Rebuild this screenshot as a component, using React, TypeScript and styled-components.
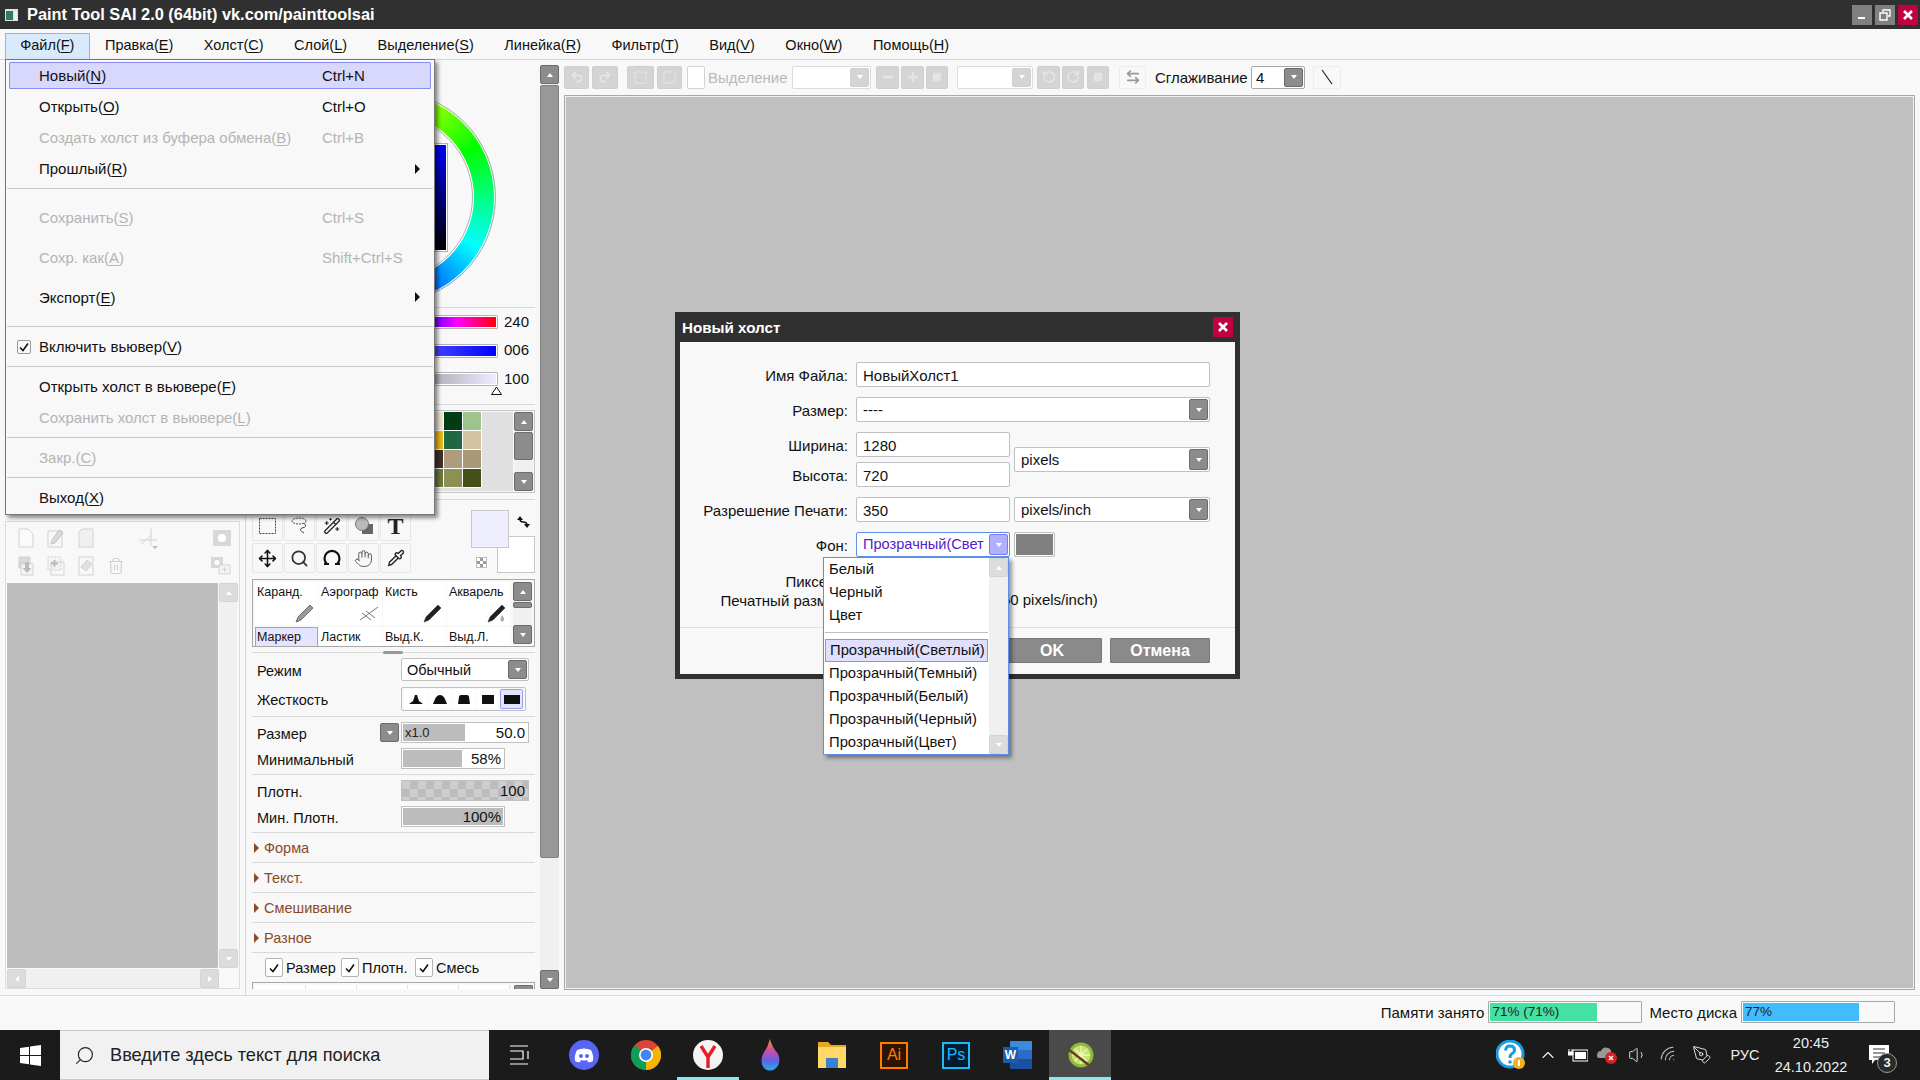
import React from 'react';
import styled, { createGlobalStyle } from 'styled-components';
import { Hand, Move, Pipette, Search, Trash2, WandSparkles, Undo2, Redo2, RotateCcw, RotateCw, Minus, Plus, Square, ArrowLeftRight, ChevronUp, Wifi, Volume1, PenTool } from 'lucide-react';

// == styles =======================================================================================
const GlobalStyle = createGlobalStyle`
  html, body { margin: 0; padding: 0; background: #f8f8f8; }
  body { font-family: "Liberation Sans", "Noto Sans", sans-serif; font-size: 15px; color: #111; }
  * { box-sizing: border-box; }
  u { text-underline-offset: 2px; }
`;

const Shell = styled.div`
  position: relative;
  width: 1920px;
  height: 1080px;
  overflow: hidden;
  display: flex;
  flex-direction: column;
  background: #f8f8f8;
`;

const TitleBar = styled.div`
  height: 29px;
  flex: none;
  background: #303030;
  color: #fff;
  display: flex;
  align-items: center;
  padding: 0 2px 0 5px;
`;

const TitleText = styled.div`
  font-weight: bold;
  font-size: 16.35px;
  flex: 1;
  margin-left: 9px;
`;

const WinBtn = styled.div<{ $close?: boolean }>`
  width: 20px;
  height: 20px;
  margin-left: 3px;
  background: ${ ( { $close } ) => ( $close ? '#c00040' : '#808080' ) };
  display: flex;
  align-items: center;
  justify-content: center;
`;

const MenuBar = styled.div`
  height: 31px;
  flex: none;
  display: flex;
  padding: 4px 0 0 5px;
  border-bottom: 1px solid #d4d4d4;
`;

const MenuTitle = styled.div<{ $open?: boolean }>`
  height: 27px;
  line-height: 22px;
  padding: 0 14.25px;
  font-size: 14.5px;
  border: 1px solid ${ ( { $open } ) => ( $open ? '#8cb8e8' : 'transparent' ) };
  background: ${ ( { $open } ) => ( $open ? '#d8eafc' : 'transparent' ) };
`;

const Workspace = styled.div`
  flex: 1;
  display: flex;
  min-height: 0;
`;

const LayerColumn = styled.div`
  width: 246px;
  flex: none;
  display: flex;
  flex-direction: column;
  justify-content: flex-end;
  padding: 0 5px 6px;
  border-right: 1px solid #d8d8d8;
`;

const LayerBox = styled.div`
  height: 468px;
  border: 1px solid #dcdcdc;
  display: flex;
  flex-direction: column;
  padding: 0 2px 0 1px;
`;

const IconRow = styled.div<{ $h: number; $mb?: number }>`
  height: ${ ( { $h } ) => $h }px;
  margin-bottom: ${ ( { $mb } ) => $mb || 0 }px;
  flex: none;
  display: flex;
  align-items: center;
  padding: 0 6px 0 11px;
  gap: 13px;
  color: #d2d2d2;
`;

const Spacer = styled.div`
  flex: 1;
`;

const LayerBody = styled.div`
  flex: 1;
  display: flex;
  gap: 1px;
  min-height: 0;
`;

const LayerList = styled.div`
  width: 212px;
  background: #bebebe;
`;

const VTrack = styled.div<{ $w?: number }>`
  width: ${ ( { $w } ) => $w || 19 }px;
  flex: none;
  display: flex;
  flex-direction: column;
  justify-content: space-between;
  background: #f0f0f0;
`;

const HTrack = styled.div`
  width: 212px;
  height: 19px;
  margin: 1px 0 0;
  display: flex;
  justify-content: space-between;
  background: #f0f0f0;
`;

const ScrollBtn = styled.div<{ $off?: boolean }>`
  width: 19px;
  height: 19px;
  flex: none;
  border-radius: 2px;
  border: 1px solid ${ ( { $off } ) => ( $off ? '#d4d4d4' : '#6c6c6c' ) };
  background: ${ ( { $off } ) => ( $off ? '#dcdcdc' : '#8c8c8c' ) };
  display: flex;
  align-items: center;
  justify-content: center;
`;

const Arrow = styled.span<{ $dir: 'up' | 'down' | 'left' | 'right'; $color?: string; $big?: boolean }>`
  width: 0;
  height: 0;
  border: ${ ( { $big } ) => ( $big ? 5 : 3 ) }px solid transparent;
  ${ ( { $dir, $color, $big } ) => {
    const c = $color || '#fff';
    const s = $big ? 5 : 4;
    if ( $dir === 'up' ) { return `border-bottom: ${ s }px solid ${ c }; border-top: 0;`; }
    if ( $dir === 'down' ) { return `border-top: ${ s }px solid ${ c }; border-bottom: 0;`; }
    if ( $dir === 'left' ) { return `border-right: ${ s }px solid ${ c }; border-left: 0;`; }
    return `border-left: ${ s }px solid ${ c }; border-right: 0;`;
  } }
`;

const ToolColumn = styled.div`
  width: 294px;
  flex: none;
  padding: 0 5px 0 6px;
  display: flex;
  flex-direction: column;
  overflow: hidden;
`;

const WheelArea = styled.div`
  height: 247px;
  flex: none;
  padding: 31px 7px 0 0;
  display: flex;
  justify-content: center;
`;

const Wheel = styled.div`
  position: relative;
  width: 212px;
  height: 212px;
  border-radius: 50%;
  border: 1px solid #b0b0b0;
  background: conic-gradient(#ff0, #0f0 60deg, #0ff 120deg, #00f 180deg, #f0f 240deg, #f00 300deg, #ff0);
  box-shadow: inset 0 0 0 1px #fff;
`;

const WheelHole = styled.div`
  position: absolute;
  inset: 22px;
  border-radius: 50%;
  background: #f8f8f8;
  border: 1px solid #b0b0b0;
  box-shadow: 0 0 0 1px #fff;
`;

const ValueSquare = styled.div`
  position: absolute;
  left: 47px;
  top: 51px;
  width: 116px;
  height: 109px;
  border: 1px solid #b0b0b0;
  box-shadow: inset 0 0 0 1px #fff;
  background: linear-gradient(#00f, #000), #00f;
`;

const Rule = styled.div<{ $top?: number; $bottom?: number }>`
  height: 1px;
  flex: none;
  background: #d8d8d8;
  margin: ${ ( { $top } ) => $top || 0 }px 0 ${ ( { $bottom } ) => $bottom || 0 }px;
`;

const ColorRow = styled.div`
  height: 14px;
  flex: none;
  margin-bottom: 14.5px;
  display: flex;
  align-items: center;
  gap: 6px;
  padding-left: 4px;
`;

const ColorBar = styled.div<{ $bg: string }>`
  position: relative;
  width: 242px;
  height: 14px;
  border: 1px solid #b4b4b4;
  border-radius: 1px;
  background: ${ ( { $bg } ) => $bg };
  box-shadow: inset 0 0 0 1px #fff;
`;

const BarMark = styled.svg`
  position: absolute;
  right: -5px;
  bottom: -10px;
`;

const ColorValue = styled.div`
  font-size: 15px;
  margin-top: -2px;
`;

const PaletteBox = styled.div`
  height: 83px;
  flex: none;
  border: 1px solid #c4c4c4;
  display: flex;
  padding: 1px;
  gap: 1px;
`;

const Swatches = styled.div`
  flex: 1;
  display: grid;
  grid-template-columns: repeat(12, 19px);
  grid-auto-rows: 19px;
  background: #e0e0e0;
  padding-bottom: 4px;
`;

const Swatch = styled.div<{ $c: string }>`
  background: ${ ( { $c } ) => $c };
  border: 0 solid #fff;
  border-width: 0 1px 1px 0;
`;

const BarThumb = styled.div<{ $h: number }>`
  height: ${ ( { $h } ) => $h }px;
  margin: 1px 0;
  background: #8c8c8c;
  border: 1px solid #6c6c6c;
  border-radius: 2px;
`;

const ToolArea = styled.div`
  height: 68px;
  flex: none;
  display: flex;
  justify-content: space-between;
  margin-top: 5px;
`;

const ToolGrid = styled.div`
  display: grid;
  grid-template-columns: repeat(5, 31px);
  grid-auto-rows: 30px;
  gap: 2px 1px;
  align-content: end;
`;

const ToolCell = styled.div`
  border: 1px solid #e6e6e6;
  border-radius: 2px;
  display: flex;
  align-items: center;
  justify-content: center;
  color: #222;
`;

const SerifT = styled.span`
  font-family: "Liberation Serif", serif;
  font-weight: bold;
  font-size: 24px;
  line-height: 1;
`;

const ColorPair = styled.div`
  position: relative;
  width: 64px;
  height: 63px;
  margin-top: 5px;
`;

const BackColor = styled.div`
  position: absolute;
  right: 0;
  bottom: 0;
  width: 38px;
  height: 37px;
  background: #fff;
  border: 1px solid #c8c8c8;
`;

const ForeColor = styled.div`
  position: absolute;
  left: 0;
  top: 0;
  width: 38px;
  height: 38px;
  background: #eeeeff;
  border: 1px solid #c8c8c8;
`;

const SwapIcon = styled.svg`
  position: absolute;
  right: 5px;
  top: 5px;
`;

const MiniChecker = styled.div`
  position: absolute;
  left: 5px;
  bottom: 5px;
  width: 11px;
  height: 11px;
  border: 1px solid #bbb;
  background: repeating-conic-gradient(#999 0 25%, #fff 0 50%) 0 0 / 6px 6px;
`;

const BrushBox = styled.div`
  height: 68px;
  flex: none;
  margin-top: 6px;
  border: 1px solid #a8a8a8;
  display: flex;
  padding: 2px;
  overflow: hidden;
`;

const BrushGrid = styled.div`
  width: 258px;
  display: grid;
  grid-template-columns: repeat(4, 63px);
  grid-template-rows: 43px 20px;
  gap: 2px 1px;
  margin-right: 1px;
`;

const BrushCell = styled.div<{ $active?: boolean }>`
  position: relative;
  background: ${ ( { $active } ) => ( $active ? '#e4e4ff' : '#fff' ) };
  border: 1px solid ${ ( { $active } ) => ( $active ? '#9c9cf0' : 'transparent' ) };
  border-bottom: 0;
  padding: 2px 1px;
  font-size: 12.5px;
  line-height: 15px;
  white-space: nowrap;
  overflow: hidden;
`;

const BrushIcon = styled.svg`
  position: absolute;
  right: 2px;
  bottom: 2px;
`;

const GripRow = styled.div`
  position: relative;
  height: 1px;
  flex: none;
  margin: 5px 0;
  background: #d8d8d8;
`;

const Grip = styled.div`
  position: absolute;
  left: 131px;
  top: -1px;
  width: 20px;
  height: 3px;
  background: #999;
  border-radius: 2px;
`;

const PropRow = styled.div<{ $h: number; $mt?: number }>`
  height: ${ ( { $h } ) => $h }px;
  margin-top: ${ ( { $mt } ) => $mt || 0 }px;
  flex: none;
  display: flex;
  align-items: center;
  padding: 0 6px 0 5px;
  font-size: 14.5px;
`;

const PropLabel = styled.div`
  flex: 1;
  padding-top: 2px;
`;

const PropSelect = styled.div<{ $w: number }>`
  width: ${ ( { $w } ) => $w }px;
  height: 23px;
  background: #fff;
  border: 1px solid #c0c0c0;
  border-radius: 2px;
  display: flex;
  align-items: center;
  justify-content: space-between;
  padding: 1px 1px 1px 5px;
  flex: none;
`;

const DropBtn = styled.div<{ $off?: boolean; $focus?: boolean }>`
  width: 19px;
  height: 100%;
  flex: none;
  border-radius: 2px;
  background: ${ ( { $off, $focus } ) => ( $focus ? '#b0b0ff' : $off ? '#d4d4d4' : '#8c8c8c' ) };
  border: 1px solid ${ ( { $off, $focus } ) => ( $focus ? '#7c7cf0' : $off ? '#d0d0d0' : '#6c6c6c' ) };
  display: flex;
  align-items: center;
  justify-content: center;
`;

const HardGroup = styled.div`
  width: 125px;
  height: 24px;
  border: 1px solid #c0c0c0;
  border-radius: 2px;
  padding: 1px 2px;
  display: grid;
  grid-template-columns: repeat(5, 1fr);
  gap: 1px;
  flex: none;
  margin-right: 3px;
`;

const HardCell = styled.div<{ $on?: boolean }>`
  background: ${ ( { $on } ) => ( $on ? '#e4e4ff' : '#fff' ) };
  border: 1px solid ${ ( { $on } ) => ( $on ? '#9c9cf0' : 'transparent' ) };
  border-radius: 2px;
  display: flex;
  align-items: center;
  justify-content: center;
`;

const SizeDrop = styled.div`
  width: 19px;
  height: 19px;
  margin-right: 2px;
  border-radius: 2px;
  background: #8c8c8c;
  border: 1px solid #6c6c6c;
  display: flex;
  align-items: center;
  justify-content: center;
  flex: none;
`;

const Slider = styled.div<{ $w: number; $checker?: boolean }>`
  position: relative;
  width: ${ ( { $w } ) => $w }px;
  height: 21px;
  flex: none;
  border: 1px solid #c0c0c0;
  background: #fff;
  margin-right: ${ ( { $w } ) => 128 - $w }px;
  padding: 1px;
  display: flex;
  align-items: center;
  justify-content: flex-end;
  font-size: 15px;
  ${ ( { $checker } ) => ( $checker
    ? 'background: repeating-conic-gradient(#bcbcbc 0 25%, #cdcdcd 0 50%) 0 0 / 16px 16px;'
    : '' ) }
`;

const SliderFill = styled.div`
  position: absolute;
  left: 1px;
  top: 1px;
  bottom: 1px;
  background: #bcbcbc;
`;

const SliderNote = styled.span`
  position: absolute;
  left: 3px;
  font-size: 13px;
  color: #222;
`;

const SliderValue = styled.span`
  position: relative;
  padding-right: 2px;
`;

const SectionRow = styled.div`
  height: 29px;
  flex: none;
  display: flex;
  align-items: center;
  gap: 5px;
  padding-left: 2px;
  color: #8a4a28;
  font-size: 14.5px;
`;

const CheckRow = styled.div`
  height: 29px;
  flex: none;
  display: flex;
  align-items: center;
  padding-left: 13px;
  font-size: 14.5px;
`;

const CheckBox = styled.div`
  width: 18px;
  height: 19px;
  margin-right: 3px;
  border: 1px solid #b4b4b4;
  border-radius: 2px;
  background: #fff;
  display: flex;
  align-items: center;
  justify-content: center;
`;

const CheckLabel = styled.span<{ $w: number }>`
  width: ${ ( { $w } ) => $w }px;
`;

const BottomList = styled.div`
  height: 7px;
  flex: none;
  border: 1px solid #a8a8a8;
  border-bottom: 0;
  padding: 2px 1px 0 2px;
  display: flex;
  overflow: hidden;
`;

const BottomCell = styled.div`
  width: 51px;
  flex: none;
  background: #fff;
  border-right: 1px solid #e0e0e0;
`;

const BottomThumb = styled.div`
  margin-left: auto;
  width: 19px;
  background: #8c8c8c;
  border: 1px solid #6c6c6c;
  border-bottom: 0;
  border-radius: 2px 2px 0 0;
`;

const MainScroll = styled.div`
  width: 19px;
  flex: none;
  display: flex;
  flex-direction: column;
  padding: 5px 0 6px;
  background: #f0f0f0;
  background-clip: content-box;
`;

const MainThumb = styled.div`
  height: 773px;
  flex: none;
  margin: 1px 0;
  background: #989898;
  border: 1px solid #808080;
  border-radius: 2px;
`;

const CanvasColumn = styled.div`
  flex: 1;
  display: flex;
  flex-direction: column;
  padding: 0 5px 5px 5px;
  min-width: 0;
`;

const OptionsBar = styled.div`
  height: 35px;
  flex: none;
  display: flex;
  align-items: center;
  padding-bottom: 1px;
`;

const OptBtn = styled.div<{ $w: number; $ml?: number; $plain?: boolean }>`
  width: ${ ( { $w } ) => $w }px;
  height: 23px;
  margin-left: ${ ( { $ml } ) => $ml ?? 3 }px;
  flex: none;
  border-radius: 2px;
  background: ${ ( { $plain } ) => ( $plain ? '#f8f8f8' : '#d4d4d4' ) };
  border: 1px solid ${ ( { $plain } ) => ( $plain ? '#ececec' : '#d0d0d0' ) };
  color: ${ ( { $plain } ) => ( $plain ? '#999' : '#e4e4e4' ) };
  display: flex;
  align-items: center;
  justify-content: center;
`;

const OptCheck = styled.div`
  width: 18px;
  height: 23px;
  margin-left: 5px;
  border: 1px solid #d4d4d4;
  border-radius: 2px;
  background: #fff;
  flex: none;
`;

const OptLabel = styled.div<{ $off?: boolean; $ml: number; $w: number }>`
  margin-left: ${ ( { $ml } ) => $ml }px;
  width: ${ ( { $w } ) => $w }px;
  flex: none;
  color: ${ ( { $off } ) => ( $off ? '#b8b8b8' : '#111' ) };
  font-size: 15px;
  white-space: nowrap;
`;

const OptSelect = styled.div<{ $w: number; $ml: number; $off?: boolean }>`
  width: ${ ( { $w } ) => $w }px;
  height: 23px;
  margin-left: ${ ( { $ml } ) => $ml }px;
  flex: none;
  border: 1px solid ${ ( { $off } ) => ( $off ? '#dcdcdc' : '#a8a8a8' ) };
  border-radius: 2px;
  background: #fff;
  display: flex;
  justify-content: space-between;
  align-items: center;
  padding: 1px 1px 1px 4px;
`;

const CanvasFrame = styled.div`
  flex: 1;
  background: #c0c0c0;
  border: 1px solid #a8a8a8;
  box-shadow: inset 0 0 0 1px #f0f0f0;
`;

const StatusBar = styled.div`
  height: 35px;
  flex: none;
  border-top: 1px solid #dcdcdc;
  display: flex;
  align-items: center;
  justify-content: flex-end;
  padding: 0 25px 2px 0;
  font-size: 15px;
`;

const Meter = styled.div<{ $mr?: number }>`
  position: relative;
  width: 154px;
  height: 22px;
  margin-left: 4px;
  margin-right: ${ ( { $mr } ) => $mr || 0 }px;
  border: 1px solid #a8a8a8;
  border-radius: 1px;
  background: #f8f8f8;
  padding: 1px;
  display: flex;
`;

const MeterFill = styled.div<{ $c: string }>`
  background: ${ ( { $c } ) => $c };
  height: 100%;
`;

const MeterText = styled.span`
  position: absolute;
  left: 3px;
  top: 2px;
  font-size: 13.5px;
  color: #222;
`;

const Taskbar = styled.div`
  height: 50px;
  flex: none;
  display: flex;
  background: #1b1b1b;
  color: #fff;
`;

const StartBtn = styled.div`
  width: 60px;
  display: flex;
  align-items: center;
  justify-content: center;
  flex: none;
`;

const SearchBox = styled.div`
  width: 429px;
  flex: none;
  background: #f1f1f1;
  border: 1px solid #c8c8c8;
  border-width: 1px 0;
  display: flex;
  align-items: center;
  gap: 15px;
  padding-left: 14px;
  color: #222;
  font-size: 18.2px;
`;

const TaskItem = styled.div<{ $open?: boolean; $active?: boolean; $w?: number }>`
  position: relative;
  width: ${ ( { $w } ) => $w || 62 }px;
  flex: none;
  display: flex;
  align-items: center;
  justify-content: center;
  background: ${ ( { $active } ) => ( $active ? '#4a4a4a' : 'transparent' ) };
  border-bottom: 3px solid ${ ( { $open } ) => ( $open ? '#92e4ea' : 'transparent' ) };
  padding-top: 3px;
`;

const AppBadge = styled.div<{ $c: string; $bg: string }>`
  width: 28px;
  height: 27px;
  border: 2px solid ${ ( { $c } ) => $c };
  background: ${ ( { $bg } ) => $bg };
  color: ${ ( { $c } ) => $c };
  font-size: 16px;
  display: flex;
  align-items: center;
  justify-content: center;
`;

const WordTile = styled.div`
  position: relative;
  width: 22px;
  height: 28px;
  margin-left: 6px;
  background: linear-gradient(#3a8ae0 0 33%, #2a6cc8 33% 66%, #1c4fa0 66%);
  border-radius: 1px;
`;

const WordLetter = styled.span`
  position: absolute;
  left: -7px;
  top: 6px;
  width: 15px;
  height: 16px;
  background: #1a5cb0;
  font-size: 12px;
  font-weight: bold;
  text-align: center;
  line-height: 16px;
`;

const Tray = styled.div`
  margin-left: auto;
  display: flex;
  padding-right: 13px;
`;

const TrayItem = styled.div<{ $w: number }>`
  position: relative;
  width: ${ ( { $w } ) => $w }px;
  flex: none;
  display: flex;
  flex-direction: column;
  align-items: center;
  justify-content: center;
  font-size: 14.5px;
  color: #eee;
  line-height: 24px;
`;

const NotifyCount = styled.span`
  position: absolute;
  left: 26px;
  top: 23px;
  width: 20px;
  height: 20px;
  border-radius: 50%;
  border: 1px solid #999;
  background: #2a2a2a;
  font-size: 13px;
  font-weight: bold;
  line-height: 18px;
  text-align: center;
`;

// -- overlays ---------------------------------------------------------------------------------
const FileMenu = styled.div`
  position: absolute;
  left: 5px;
  top: 59px;
  width: 430px;
  padding-bottom: 1px;
  background: #f8f8f8;
  border: 1px solid #777;
  box-shadow: 3px 3px 4px rgba(0, 0, 0, 0.45);
  z-index: 5;
`;

const MenuRow = styled.div<{ $h?: number; $off?: boolean; $active?: boolean }>`
  position: relative;
  height: ${ ( { $h } ) => $h || 31 }px;
  display: grid;
  grid-template-columns: 33px 283px 1fr;
  align-items: center;
  color: ${ ( { $off } ) => ( $off ? '#b4b4b4' : '#111' ) };
  font-size: 15px;
  white-space: nowrap;
  &::before {
    content: '';
    position: absolute;
    inset: 2px 3px;
    background: ${ ( { $active } ) => ( $active ? '#d8d8fc' : 'transparent' ) };
    border: 1px solid ${ ( { $active } ) => ( $active ? '#8c8cf8' : 'transparent' ) };
    border-radius: 1px;
  }
  & > * { position: relative; grid-row: 1; }
`;

const MenuCheck = styled.div`
  grid-column: 1;
  width: 14px;
  height: 14px;
  margin-left: 11px;
  border: 1px solid #999;
  border-radius: 2px;
  display: flex;
  align-items: center;
  justify-content: center;
`;

const MenuLabel = styled.div`
  grid-column: 2;
`;

const MenuKey = styled.div`
  grid-column: 3;
`;

const MenuSub = styled.div`
  position: absolute !important;
  right: 14px;
  top: 50%;
  transform: translateY(-50%);
  display: flex;
`;

const MenuSep = styled.div<{ $top: number; $bottom: number }>`
  height: 1px;
  margin: ${ ( { $top, $bottom } ) => `${ $top }px 1px ${ $bottom }px` };
  background: #c8c8c8;
`;

const Dialog = styled.div`
  position: absolute;
  left: 675px;
  top: 312px;
  width: 565px;
  height: 367px;
  background: #f8f8f8;
  border: 5px solid #303030;
  border-top: 0;
  z-index: 3;
`;

const DialogTitle = styled.div`
  height: 30px;
  margin: 0 -5px;
  padding: 0 5px 0 7px;
  background: #303030;
  color: #fff;
  font-weight: bold;
  font-size: 15.2px;
  display: flex;
  align-items: center;
  justify-content: space-between;
`;

const DialogClose = styled.div`
  width: 20px;
  height: 20px;
  margin-right: 2px;
  background: #c00040;
  display: flex;
  align-items: center;
  justify-content: center;
`;

const DialogForm = styled.div`
  padding: 20px 25px 0 0;
  height: 286px;
  border-bottom: 1px solid #e0e0e0;
  display: flex;
  flex-direction: column;
`;

const FormRow = styled.div<{ $mb?: number }>`
  display: flex;
  align-items: center;
  margin-bottom: ${ ( { $mb } ) => $mb ?? 10 }px;
`;

const FormLabel = styled.div`
  width: 168px;
  margin-right: 8px;
  padding-top: 1px;
  text-align: right;
  flex: none;
  white-space: nowrap;
`;

const Input = styled.div<{ $w?: number }>`
  width: ${ ( { $w } ) => ( $w ? `${ $w }px` : '100%' ) };
  height: 25px;
  flex: ${ ( { $w } ) => ( $w ? 'none' : 1 ) };
  background: #fff;
  border: 1px solid #c0c0c0;
  border-radius: 2px;
  padding: 0 6px;
  line-height: 25px;
  font-size: 15px;
`;

const Select = styled(Input)<{ $focus?: boolean }>`
  display: flex;
  align-items: center;
  justify-content: space-between;
  padding: 1px 1px 1px 6px;
  border-color: ${ ( { $focus } ) => ( $focus ? '#5c90e8' : '#c0c0c0' ) };
  color: ${ ( { $focus } ) => ( $focus ? '#5420c8' : '#111' ) };
  font-size: ${ ( { $focus } ) => ( $focus ? '14.6px' : '15px' ) };
  white-space: nowrap;
`;

const SizeBlock = styled.div`
  display: flex;
  align-items: center;
  margin-bottom: 10px;
`;

const SizeLabels = styled.div`
  width: 334px;
  display: flex;
  flex-direction: column;
  gap: 5px;
  flex: none;
`;

const ColorChip = styled.div`
  width: 41px;
  height: 25px;
  margin-left: 4px;
  border: 1px solid #c0c0c0;
  border-radius: 2px;
  background: #808080;
  box-shadow: inset 0 0 0 1px #fff;
`;

const InfoRow = styled.div`
  display: flex;
  line-height: 18px;
`;

const DialogButtons = styled.div`
  display: flex;
  justify-content: flex-end;
  gap: 8px;
  padding: 10px 25px 0 0;
`;

const DialogBtn = styled.div`
  width: 100px;
  height: 25px;
  background: #8a8a8a;
  border: 1px solid #777;
  border-radius: 1px;
  color: #fff;
  font-weight: bold;
  font-size: 16px;
  text-align: center;
  line-height: 23px;
`;

const DropList = styled.div`
  position: absolute;
  left: 823px;
  top: 557px;
  width: 186px;
  height: 198px;
  background: #fff;
  border: 1px solid #5c90e8;
  box-shadow: 3px 3px 4px rgba(0, 0, 0, 0.4);
  display: flex;
  z-index: 4;
`;

const DropItems = styled.div`
  flex: 1;
  min-width: 0;
`;

const DropItem = styled.div<{ $on?: boolean }>`
  height: 23px;
  line-height: ${ ( { $on } ) => ( $on ? 20 : 23 ) }px;
  margin-right: 1px;
  padding-left: ${ ( { $on } ) => ( $on ? 4 : 5 ) }px;
  margin-left: ${ ( { $on } ) => ( $on ? 1 : 0 ) }px;
  background: ${ ( { $on } ) => ( $on ? '#e0e0fc' : 'transparent' ) };
  border: ${ ( { $on } ) => ( $on ? '1px solid #9090f0' : '0' ) };
  font-size: 14.8px;
  white-space: nowrap;
`;

const DropSep = styled.div`
  height: 1px;
  margin: 5px 1px 6px;
  background: #c0c0c0;
`;

// == data =========================================================================================
const swatchRows = [
  [ '#e8e4d0', '#003c14', '#9cc48c' ],
  [ '#e8b818', '#206844', '#d4c4a4' ],
  [ '#403028', '#b09c7c', '#a89878' ],
  [ '#6c7840', '#8c9050', '#445018' ]
];

const menuItems = [ 'Правка|E', 'Холст|C', 'Слой|L', 'Выделение|S', 'Линейка|R', 'Фильтр|T', 'Вид|V', 'Окно|W', 'Помощь|H' ];

const hardShapes = [
  'M2 11 L6 8 L8 2 L10 2 L12 8 L16 11 Z',
  'M2 11 L4 6 Q6 2 9 2 Q12 2 14 6 L16 11 Z',
  'M3 11 L4 4 Q4 2 6 2 L12 2 Q14 2 14 4 L15 11 Z',
  'M3 11 L3 2 L15 2 L15 11 Z',
  'M1 11 L1 2 L17 2 L17 11 Z'
];

// == element ======================================================================================
const Mn = ( { t }: { t: string } ): JSX.Element => {
  const [ name, key ] = t.split( '|' );
  return <>{ name }(<u>{ key }</u>)</>;
};

const Tick = (): JSX.Element => (
  <svg width="12" height="12" viewBox="0 0 12 12">
    <path d="M2 6.5 L5 9.5 L10 2.5" fill="none" stroke="#111" strokeWidth="1.6" />
  </svg>
);

const Close = (): JSX.Element => (
  <svg width="12" height="12" viewBox="0 0 12 12">
    <path d="M2 2 L10 10 M10 2 L2 10" stroke="#fff" strokeWidth="2.6" />
  </svg>
);

const BrushPen = ( { color, drop }: { color: string; drop?: boolean } ): JSX.Element => (
  <BrushIcon width="20" height="20" viewBox="0 0 20 20">
    <path d="M1 19 L3 14 L15 2 L18 5 L6 17 Z" fill={ color } stroke="#333" strokeWidth="0.6" />
    { drop && <path d="M15 12 Q19 17 15 19 Q12 17 15 12 Z" fill="#aaa" /> }
  </BrushIcon>
);

const FileMenuPopup = (): JSX.Element => (
  <FileMenu>
    <MenuRow $active><MenuLabel><Mn t="Новый|N" /></MenuLabel><MenuKey>Ctrl+N</MenuKey></MenuRow>
    <MenuRow><MenuLabel><Mn t="Открыть|O" /></MenuLabel><MenuKey>Ctrl+O</MenuKey></MenuRow>
    <MenuRow $off><MenuLabel><Mn t="Создать холст из буфера обмена|B" /></MenuLabel><MenuKey>Ctrl+B</MenuKey></MenuRow>
    <MenuRow><MenuLabel><Mn t="Прошлый|R" /></MenuLabel><MenuSub><Arrow $dir="right" $color="#111" $big /></MenuSub></MenuRow>
    <MenuSep $top={ 4 } $bottom={ 8 } />
    <MenuRow $h={ 40 } $off><MenuLabel><Mn t="Сохранить|S" /></MenuLabel><MenuKey>Ctrl+S</MenuKey></MenuRow>
    <MenuRow $h={ 40 } $off><MenuLabel><Mn t="Сохр. как|A" /></MenuLabel><MenuKey>Shift+Ctrl+S</MenuKey></MenuRow>
    <MenuRow $h={ 40 }><MenuLabel><Mn t="Экспорт|E" /></MenuLabel><MenuSub><Arrow $dir="right" $color="#111" $big /></MenuSub></MenuRow>
    <MenuSep $top={ 9 } $bottom={ 4 } />
    <MenuRow><MenuCheck><Tick /></MenuCheck><MenuLabel><Mn t="Включить вьювер|V" /></MenuLabel></MenuRow>
    <MenuSep $top={ 4 } $bottom={ 4 } />
    <MenuRow><MenuLabel><Mn t="Открыть холст в вьювере|F" /></MenuLabel></MenuRow>
    <MenuRow $off><MenuLabel><Mn t="Сохранить холст в вьювере|L" /></MenuLabel></MenuRow>
    <MenuSep $top={ 4 } $bottom={ 4 } />
    <MenuRow $off><MenuLabel><Mn t="Закр.|C" /></MenuLabel></MenuRow>
    <MenuSep $top={ 4 } $bottom={ 4 } />
    <MenuRow><MenuLabel><Mn t="Выход|X" /></MenuLabel></MenuRow>
  </FileMenu>
);

const NewCanvasDialog = (): JSX.Element => (
  <Dialog>
    <DialogTitle>Новый холст<DialogClose><Close /></DialogClose></DialogTitle>
    <DialogForm>
      <FormRow><FormLabel>Имя Файла:</FormLabel><Input>НовыйХолст1</Input></FormRow>
      <FormRow>
        <FormLabel>Размер:</FormLabel>
        <Select>----<DropBtn><Arrow $dir="down" /></DropBtn></Select>
      </FormRow>
      <SizeBlock>
        <SizeLabels>
          <FormRow $mb={ 0 }><FormLabel>Ширина:</FormLabel><Input $w={ 154 }>1280</Input></FormRow>
          <FormRow $mb={ 0 }><FormLabel>Высота:</FormLabel><Input $w={ 154 }>720</Input></FormRow>
        </SizeLabels>
        <Select $w={ 196 }>pixels<DropBtn><Arrow $dir="down" /></DropBtn></Select>
      </SizeBlock>
      <FormRow>
        <FormLabel>Разрешение Печати:</FormLabel>
        <Input $w={ 154 }>350</Input>
        <Spacer />
        <Select $w={ 196 }>pixels/inch<DropBtn><Arrow $dir="down" /></DropBtn></Select>
      </FormRow>
      <FormRow $mb={ 15 }>
        <FormLabel>Фон:</FormLabel>
        <Select $w={ 154 } $focus>Прозрачный(Свет<DropBtn $focus><Arrow $dir="down" /></DropBtn></Select>
        <ColorChip />
      </FormRow>
      <InfoRow><FormLabel>Пиксели:</FormLabel>1280 x 720</InfoRow>
      <InfoRow><FormLabel>Печатный размер:</FormLabel>92.89 x 52.25 mm&nbsp;&nbsp;&nbsp;(350 pixels/inch)</InfoRow>
    </DialogForm>
    <DialogButtons>
      <DialogBtn>OK</DialogBtn>
      <DialogBtn>Отмена</DialogBtn>
    </DialogButtons>
  </Dialog>
);

const BackgroundList = (): JSX.Element => (
  <DropList>
    <DropItems>
      <DropItem>Белый</DropItem>
      <DropItem>Черный</DropItem>
      <DropItem>Цвет</DropItem>
      <DropSep />
      <DropItem $on>Прозрачный(Светлый)</DropItem>
      <DropItem>Прозрачный(Темный)</DropItem>
      <DropItem>Прозрачный(Белый)</DropItem>
      <DropItem>Прозрачный(Черный)</DropItem>
      <DropItem>Прозрачный(Цвет)</DropItem>
    </DropItems>
    <VTrack>
      <ScrollBtn $off><Arrow $dir="up" /></ScrollBtn>
      <ScrollBtn $off><Arrow $dir="down" /></ScrollBtn>
    </VTrack>
  </DropList>
);

const LayerPanel = (): JSX.Element => (
  <LayerColumn>
    <LayerBox>
      <IconRow $h={ 32 }>
        <svg width="16" height="20" viewBox="0 0 16 20"><path d="M1 1 H10 L15 6 V19 H1 Z" fill="#fafafa" stroke="currentColor" /></svg>
        <svg width="18" height="20" viewBox="0 0 18 20"><path d="M1 3 H15 V19 H1 Z" fill="#f8f8f8" stroke="currentColor" /><path d="M4 16 L5 12 L12 2 L16 5 L8 15 Z" fill="#dadada" stroke="#c4c4c4" /></svg>
        <svg width="16" height="20" viewBox="0 0 16 20"><path d="M4 1 H15 V19 H1 V4 Z" fill="#f0f0f0" stroke="currentColor" /></svg>
        <svg width="22" height="22" viewBox="0 0 22 22" style={ { marginLeft: 30 } }><path d="M14 1 V19 M2 13 H20 M4 17 L15 8" stroke="currentColor" fill="none" /><path d="M15 19 H21 L18 22 Z" fill="#bbb" /></svg>
        <Spacer />
        <svg width="18" height="16" viewBox="0 0 18 16"><rect width="18" height="16" fill="#d8d8d8" /><circle cx="9" cy="8" r="4" fill="#fff" /></svg>
      </IconRow>
      <IconRow $h={ 24 } $mb={ 5 }>
        <svg width="16" height="20" viewBox="0 0 16 20"><path d="M1 1 H12 V12 H1 Z" fill="#d8d8d8" stroke="currentColor" /><path d="M3 8 H15 V19 H3 Z" fill="#f4f4f4" stroke="currentColor" /><path d="M7 6 H11 V12 H13.5 L9 17 L4.5 12 H7 Z" fill="#bbb" /></svg>
        <svg width="18" height="20" viewBox="0 0 18 20"><path d="M1 1 H14 V14 H1 Z" fill="#f4f4f4" stroke="currentColor" strokeDasharray="2 1" /><path d="M4 6 H17 V19 H4 Z" fill="none" stroke="currentColor" /><path d="M7.5 4 V11 M4 7.5 H11" stroke="#bbb" strokeWidth="2" /></svg>
        <svg width="16" height="20" viewBox="0 0 16 20"><path d="M1 1 H15 V19 H1 Z" fill="#f8f8f8" stroke="currentColor" /><path d="M3 11 L9 4 L14 8 L8 15 Z" fill="#e0e0e0" stroke="currentColor" /></svg>
        <Trash2 size={ 18 } strokeWidth={ 1.6 } />
        <Spacer />
        <svg width="20" height="18" viewBox="0 0 20 18"><rect x="0" y="0" width="12" height="11" fill="#d8d8d8" /><circle cx="6" cy="5.5" r="2.5" fill="#fff" /><path d="M8 8 H19 V17 H8 Z M13.5 10 V15 M11 12.5 H16" fill="#f4f4f4" stroke="currentColor" /></svg>
      </IconRow>
      <LayerBody>
        <LayerList />
        <VTrack $w={ 18 }>
          <ScrollBtn $off><Arrow $dir="up" /></ScrollBtn>
          <ScrollBtn $off><Arrow $dir="down" /></ScrollBtn>
        </VTrack>
      </LayerBody>
      <HTrack>
        <ScrollBtn $off><Arrow $dir="left" /></ScrollBtn>
        <ScrollBtn $off><Arrow $dir="right" /></ScrollBtn>
      </HTrack>
    </LayerBox>
  </LayerColumn>
);

const ColorPanel = (): JSX.Element => (
  <>
    <WheelArea>
      <Wheel>
        <WheelHole />
        <ValueSquare />
      </Wheel>
    </WheelArea>
    <Rule $bottom={ 7 } />
    <ColorRow>
      <ColorBar $bg="linear-gradient(90deg, #f00, #ff0, #0f0, #0ff, #00f, #f0f, #f00)" />
      <ColorValue>240</ColorValue>
    </ColorRow>
    <ColorRow>
      <ColorBar $bg="linear-gradient(90deg, #fff, #00f)" />
      <ColorValue>006</ColorValue>
    </ColorRow>
    <ColorRow>
      <ColorBar $bg="linear-gradient(90deg, #000, #eeeeff)">
        <BarMark width="11" height="9" viewBox="0 0 11 9"><path d="M0.5 8.5 L5.5 1 L10.5 8.5 Z" fill="#fff" stroke="#111" /></BarMark>
      </ColorBar>
      <ColorValue>100</ColorValue>
    </ColorRow>
    <Rule $top={ 3.5 } $bottom={ 5 } />
    <PaletteBox>
      <Swatches>
        { swatchRows.map( ( row, r ) => (
          <React.Fragment key={ r }>
            { Array.from( { length: 9 } ).map( ( _, i ) => <Swatch key={ i } $c="#e0e0e0" /> ) }
            { row.map( ( c ) => <Swatch key={ c } $c={ c } /> ) }
          </React.Fragment>
        ) ) }
      </Swatches>
      <VTrack>
        <ScrollBtn><Arrow $dir="up" /></ScrollBtn>
        <BarThumb $h={ 28 } />
        <Spacer />
        <ScrollBtn><Arrow $dir="down" /></ScrollBtn>
      </VTrack>
    </PaletteBox>
  </>
);

const ToolPanel = (): JSX.Element => (
  <ToolArea>
    <ToolGrid>
      <ToolCell><svg width="20" height="20" viewBox="0 0 20 20"><rect x="1.5" y="2.5" width="16" height="15" fill="none" stroke="#444" strokeDasharray="2 1" /></svg></ToolCell>
      <ToolCell><svg width="18" height="20" viewBox="0 0 18 20"><ellipse cx="8" cy="5" rx="7" ry="3" fill="none" stroke="#444" strokeDasharray="2 1" /><path d="M13 7 Q17 11 11 12 Q7 14 13 17" fill="none" stroke="#444" /></svg></ToolCell>
      <ToolCell><WandSparkles size={ 18 } strokeWidth={ 1.6 } /></ToolCell>
      <ToolCell><svg width="20" height="20" viewBox="0 0 20 20"><rect x="8" y="8" width="11" height="10" fill="#666" /><circle cx="8" cy="8" r="6.5" fill="#bbb" stroke="#777" /></svg></ToolCell>
      <ToolCell><SerifT>T</SerifT></ToolCell>
      <ToolCell><Move size={ 19 } strokeWidth={ 2 } color="#111" /></ToolCell>
      <ToolCell><Search size={ 19 } strokeWidth={ 2.2 } color="#333" /></ToolCell>
      <ToolCell><svg width="18" height="18" viewBox="0 0 18 18"><path d="M4 15 A7.5 7.5 0 1 1 14 15 M1 15 H6 M12 15 H17" fill="none" stroke="#111" strokeWidth="2.2" /></svg></ToolCell>
      <ToolCell><Hand size={ 19 } strokeWidth={ 1.2 } color="#555" /></ToolCell>
      <ToolCell><Pipette size={ 18 } strokeWidth={ 1.8 } /></ToolCell>
    </ToolGrid>
    <ColorPair>
      <BackColor />
      <ForeColor />
      <SwapIcon width="13" height="14" viewBox="0 0 13 14">
        <path d="M3 1 L0 5 H6 Z M10 13 L13 9 H7 Z" fill="#111" />
        <path d="M3 4 Q3 7 6 7 Q10 7 10 10" fill="none" stroke="#111" strokeWidth="1.6" />
      </SwapIcon>
      <MiniChecker />
    </ColorPair>
  </ToolArea>
);

const BrushPanel = (): JSX.Element => (
  <BrushBox>
    <BrushGrid>
      <BrushCell>Каранд.<BrushPen color="#999" /></BrushCell>
      <BrushCell>Аэрограф<BrushIcon width="20" height="18" viewBox="0 0 20 18"><path d="M1 15 L19 2 M3 8 L12 15 M7 6 L16 13" stroke="#777" fill="none" /></BrushIcon></BrushCell>
      <BrushCell>Кисть<BrushPen color="#222" /></BrushCell>
      <BrushCell>Акварель<BrushPen color="#222" drop /></BrushCell>
      <BrushCell $active>Маркер</BrushCell>
      <BrushCell>Ластик</BrushCell>
      <BrushCell>Выд.К.</BrushCell>
      <BrushCell>Выд.Л.</BrushCell>
    </BrushGrid>
    <VTrack>
      <ScrollBtn><Arrow $dir="up" /></ScrollBtn>
      <BarThumb $h={ 6 } />
      <Spacer />
      <ScrollBtn><Arrow $dir="down" /></ScrollBtn>
    </VTrack>
  </BrushBox>
);

const BrushOptions = (): JSX.Element => (
  <>
    <PropRow $h={ 23 }>
      <PropLabel>Режим</PropLabel>
      <PropSelect $w={ 128 }>Обычный<DropBtn><Arrow $dir="down" /></DropBtn></PropSelect>
    </PropRow>
    <PropRow $h={ 24 } $mt={ 6 }>
      <PropLabel>Жесткость</PropLabel>
      <HardGroup>
        { hardShapes.map( ( d, i ) => (
          <HardCell key={ d } $on={ i === 4 }>
            <svg width="18" height="12" viewBox="0 0 18 12"><path d={ d } fill="#111" /></svg>
          </HardCell>
        ) ) }
      </HardGroup>
    </PropRow>
    <Rule $top={ 5 } />
    <PropRow $h={ 21 } $mt={ 5 }>
      <PropLabel>Размер</PropLabel>
      <SizeDrop><Arrow $dir="down" /></SizeDrop>
      <Slider $w={ 128 }>
        <SliderFill style={ { width: '49%' } } />
        <SliderNote>x1.0</SliderNote>
        <SliderValue>50.0</SliderValue>
      </Slider>
    </PropRow>
    <PropRow $h={ 21 } $mt={ 5 }>
      <PropLabel>Минимальный</PropLabel>
      <Slider $w={ 104 }>
        <SliderFill style={ { width: '58%' } } />
        <SliderValue>58%</SliderValue>
      </Slider>
    </PropRow>
    <Rule $top={ 5 } />
    <PropRow $h={ 21 } $mt={ 5 }>
      <PropLabel>Плотн.</PropLabel>
      <Slider $w={ 128 } $checker><SliderValue>100</SliderValue></Slider>
    </PropRow>
    <PropRow $h={ 21 } $mt={ 5 }>
      <PropLabel>Мин. Плотн.</PropLabel>
      <Slider $w={ 104 }>
        <SliderFill style={ { right: 1 } } />
        <SliderValue>100%</SliderValue>
      </Slider>
    </PropRow>
    <Rule $top={ 5 } />
    { [ 'Форма', 'Текст.', 'Смешивание', 'Разное' ].map( ( name ) => (
      <React.Fragment key={ name }>
        <SectionRow><Arrow $dir="right" $color="#8a4a28" $big />{ name }</SectionRow>
        <Rule />
      </React.Fragment>
    ) ) }
    <CheckRow>
      <CheckBox><Tick /></CheckBox><CheckLabel $w={ 55 }>Размер</CheckLabel>
      <CheckBox><Tick /></CheckBox><CheckLabel $w={ 53 }>Плотн.</CheckLabel>
      <CheckBox><Tick /></CheckBox><CheckLabel $w={ 50 }>Смесь</CheckLabel>
    </CheckRow>
    <BottomList>
      { [ 0, 1, 2, 3, 4 ].map( ( i ) => <BottomCell key={ i } /> ) }
      <BottomThumb />
    </BottomList>
  </>
);

const CanvasOptions = (): JSX.Element => (
  <OptionsBar>
    <OptBtn $w={ 25 } $ml={ 0 }><Undo2 size={ 14 } strokeWidth={ 3 } /></OptBtn>
    <OptBtn $w={ 26 }><Redo2 size={ 14 } strokeWidth={ 3 } /></OptBtn>
    <OptBtn $w={ 27 } $ml={ 9 }><Square size={ 15 } strokeDasharray="2 2" /></OptBtn>
    <OptBtn $w={ 25 }><Square size={ 15 } strokeDasharray="2 2" /></OptBtn>
    <OptCheck />
    <OptLabel $off $ml={ 3 } $w={ 74 }>Выделение</OptLabel>
    <OptSelect $off $w={ 79 } $ml={ 10 }><span /><DropBtn $off><Arrow $dir="down" /></DropBtn></OptSelect>
    <OptBtn $w={ 23 } $ml={ 5 }><Minus size={ 14 } strokeWidth={ 4 } /></OptBtn>
    <OptBtn $w={ 23 } $ml={ 2 }><Plus size={ 14 } strokeWidth={ 4 } /></OptBtn>
    <OptBtn $w={ 22 } $ml={ 2 }><Square size={ 10 } fill="currentColor" /></OptBtn>
    <OptSelect $off $w={ 76 } $ml={ 9 }><span /><DropBtn $off><Arrow $dir="down" /></DropBtn></OptSelect>
    <OptBtn $w={ 23 } $ml={ 4 }><RotateCcw size={ 14 } strokeWidth={ 3 } /></OptBtn>
    <OptBtn $w={ 22 } $ml={ 2 }><RotateCw size={ 14 } strokeWidth={ 3 } /></OptBtn>
    <OptBtn $w={ 22 } $ml={ 3 }><Square size={ 10 } fill="currentColor" /></OptBtn>
    <OptBtn $w={ 27 } $ml={ 10 } $plain><ArrowLeftRight size={ 16 } strokeWidth={ 2.4 } /></OptBtn>
    <OptLabel $ml={ 9 } $w={ 92 }>Сглаживание</OptLabel>
    <OptSelect $w={ 54 } $ml={ 4 }>4<DropBtn><Arrow $dir="down" /></DropBtn></OptSelect>
    <OptBtn $w={ 28 } $ml={ 8 } $plain>
      <svg width="16" height="16" viewBox="0 0 16 16"><path d="M3 1 L13 15" stroke="#222" strokeWidth="1.2" /></svg>
    </OptBtn>
  </OptionsBar>
);

const AppIcons = (): JSX.Element => (
  <>
    <TaskItem>
      <svg width="30" height="30" viewBox="0 0 30 30"><circle cx="15" cy="15" r="15" fill="#5865f2" /><path d="M8 10 Q15 7 22 10 Q25 16 24 21 Q21 23 19 22 L18 20 Q15 21 12 20 L11 22 Q9 23 6 21 Q5 16 8 10 Z" fill="#fff" /><circle cx="12" cy="16" r="2" fill="#5865f2" /><circle cx="18" cy="16" r="2" fill="#5865f2" /></svg>
    </TaskItem>
    <TaskItem>
      <svg width="30" height="30" viewBox="0 0 30 30"><circle cx="15" cy="15" r="15" fill="#db4437" /><path d="M15 15 L2 23 A15 15 0 0 1 4 5 Z" fill="#0f9d58" /><path d="M15 15 L27 6 A15 15 0 0 1 15 30 Z" fill="#f4b400" /><path d="M2 23 A15 15 0 0 0 15 30 L15 15 Z" fill="#0f9d58" /><circle cx="15" cy="15" r="7" fill="#fff" /><circle cx="15" cy="15" r="5.4" fill="#4285f4" /></svg>
    </TaskItem>
    <TaskItem $open>
      <svg width="30" height="30" viewBox="0 0 30 30"><circle cx="15" cy="15" r="15" fill="#f4f4f4" /><path d="M8 6 L15 17 L22 6 M15 17 V28" fill="none" stroke="#e81c24" strokeWidth="3.4" /></svg>
    </TaskItem>
    <TaskItem>
      <svg width="24" height="32" viewBox="0 0 24 32">
        <defs><linearGradient id="dropFill" x1="0" y1="0" x2="0" y2="1"><stop offset="0" stopColor="#f48a2c" /><stop offset="0.4" stopColor="#c44cb0" /><stop offset="0.7" stopColor="#5c64e0" /><stop offset="1" stopColor="#20b0f0" /></linearGradient></defs>
        <path d="M12 0 Q14 8 20 15 Q24 24 17 30 Q12 33 7 30 Q1 24 5 15 Q10 8 12 0 Z" fill="url(#dropFill)" />
      </svg>
    </TaskItem>
    <TaskItem>
      <svg width="30" height="28" viewBox="0 0 30 28"><path d="M1 1 H11 L14 4 H29 V27 H1 Z" fill="#e8a820" /><rect x="1" y="6" width="28" height="21" fill="#ffd868" /><rect x="9" y="17" width="12" height="10" fill="#3a80d0" /></svg>
    </TaskItem>
    <TaskItem><AppBadge $c="#ff7c00" $bg="#2c1400">Ai</AppBadge></TaskItem>
    <TaskItem><AppBadge $c="#20b8f8" $bg="#001c30">Ps</AppBadge></TaskItem>
    <TaskItem><WordTile><WordLetter>W</WordLetter></WordTile></TaskItem>
    <TaskItem $open $active>
      <svg width="30" height="28" viewBox="0 0 30 28"><circle cx="16" cy="14" r="12.5" fill="#8cb840" /><circle cx="16" cy="14" r="9.5" fill="#c8e070" /><path d="M16 5 V23 M7 14 H25 M10 8 L22 20 M22 8 L10 20" stroke="#eef8b8" strokeWidth="1.3" /><path d="M3 8 L25 25" stroke="#6a3c20" strokeWidth="2.4" /></svg>
    </TaskItem>
  </>
);

const SystemTray = (): JSX.Element => (
  <Tray>
    <TrayItem $w={ 40 }>
      <svg width="30" height="30" viewBox="0 0 30 30"><circle cx="14" cy="14" r="13" fill="#fff" stroke="#1c9ce0" strokeWidth="3" /><path d="M9.5 10.5 Q10 6 14 6 Q18.5 6 18.5 10 Q18.5 12.5 15.5 14 Q14 15 14 18" fill="none" stroke="#1c9ce0" strokeWidth="3" /><circle cx="14" cy="22" r="1.8" fill="#1c9ce0" /><circle cx="23" cy="23" r="6" fill="#f4b020" /><path d="M23 20 V26" stroke="#fff" strokeWidth="2" /></svg>
    </TrayItem>
    <TrayItem $w={ 34 }><ChevronUp size={ 20 } strokeWidth={ 1.4 } /></TrayItem>
    <TrayItem $w={ 26 }>
      <svg width="20" height="14" viewBox="0 0 20 14"><path d="M1 1 V4 M4 1 V4 M0 4 H5 V7 H0 Z" stroke="#fff" fill="#fff" /><rect x="5" y="2" width="15" height="11" fill="none" stroke="#fff" /><rect x="7" y="4" width="11" height="7" fill="#fff" /></svg>
    </TrayItem>
    <TrayItem $w={ 32 }>
      <svg width="22" height="20" viewBox="0 0 22 20"><path d="M1 11 Q1 6 5 6 Q7 1 12 3 Q16 4 15 9 L15 13 H3 Q1 13 1 11 Z" fill="#999" /><circle cx="15" cy="13" r="6" fill="#d42020" /><path d="M13 11 L17 15 M17 11 L13 15" stroke="#fff" strokeWidth="1.4" /></svg>
    </TrayItem>
    <TrayItem $w={ 30 }><Volume1 size={ 20 } strokeWidth={ 1.1 } /></TrayItem>
    <TrayItem $w={ 32 }><Wifi size={ 20 } strokeWidth={ 1.3 } color="#bbb" style={ { transform: 'rotate(-45deg)' } } /></TrayItem>
    <TrayItem $w={ 34 }><PenTool size={ 20 } strokeWidth={ 1.1 } /></TrayItem>
    <TrayItem $w={ 52 }>РУС</TrayItem>
    <TrayItem $w={ 80 }><span>20:45</span><span>24.10.2022</span></TrayItem>
    <TrayItem $w={ 56 }>
      <svg width="20" height="20" viewBox="0 0 20 20"><path d="M0 0 H20 V15 H6 L3 19 V15 H0 Z" fill="#fff" /><path d="M4 4 H16 M4 8 H16 M4 12 H12" stroke="#333" /></svg>
      <NotifyCount>3</NotifyCount>
    </TrayItem>
  </Tray>
);

const App = (): JSX.Element => (
  <Shell>
    <GlobalStyle />
    <TitleBar>
      <svg width="13" height="12" viewBox="0 0 13 12"><rect width="13" height="12" fill="#d8e4e0" /><rect x="1" y="2" width="7" height="9" fill="#2c7c6c" /><rect x="9" y="2" width="3" height="9" fill="#f0f0f0" /></svg>
      <TitleText>Paint Tool SAI 2.0 (64bit) vk.com/painttoolsai</TitleText>
      <WinBtn><svg width="10" height="10" viewBox="0 0 10 10"><rect x="1" y="7" width="7" height="2" fill="#fff" /></svg></WinBtn>
      <WinBtn><svg width="12" height="12" viewBox="0 0 12 12"><path d="M4 3 V1 H11 V7 H9 M1 4 H8 V11 H1 Z" fill="none" stroke="#fff" strokeWidth="1.4" /></svg></WinBtn>
      <WinBtn $close><Close /></WinBtn>
    </TitleBar>
    <MenuBar>
      <MenuTitle $open><Mn t="Файл|F" /></MenuTitle>
      { menuItems.map( ( m ) => <MenuTitle key={ m }><Mn t={ m } /></MenuTitle> ) }
    </MenuBar>
    <Workspace>
      <LayerPanel />
      <ToolColumn>
        <ColorPanel />
        <Rule $top={ 6 } />
        <ToolPanel />
        <BrushPanel />
        <GripRow><Grip /></GripRow>
        <BrushOptions />
      </ToolColumn>
      <MainScroll>
        <ScrollBtn><Arrow $dir="up" /></ScrollBtn>
        <MainThumb />
        <Spacer />
        <ScrollBtn><Arrow $dir="down" /></ScrollBtn>
      </MainScroll>
      <CanvasColumn>
        <CanvasOptions />
        <CanvasFrame />
      </CanvasColumn>
    </Workspace>
    <StatusBar>
      Памяти занято
      <Meter $mr={ 7 }><MeterFill $c="#44e0a4" style={ { width: '71%' } } /><MeterText>71% (71%)</MeterText></Meter>
      Место диска
      <Meter><MeterFill $c="#40bcff" style={ { width: '77%' } } /><MeterText>77%</MeterText></Meter>
    </StatusBar>
    <Taskbar>
      <StartBtn>
        <svg width="21" height="21" viewBox="0 0 21 21"><path d="M0 3 L9 1.7 V10 H0 Z M10 1.5 L21 0 V10 H10 Z M0 11 H9 V19.3 L0 18 Z M10 11 H21 V21 L10 19.5 Z" fill="#fff" /></svg>
      </StartBtn>
      <SearchBox>
        <Search size={ 21 } strokeWidth={ 1.3 } style={ { transform: 'scaleX(-1)' } } />
        Введите здесь текст для поиска
      </SearchBox>
      <TaskItem $w={ 64 }>
        <svg width="20" height="22" viewBox="0 0 20 22" style={ { marginRight: 4 } }><path d="M1 2 H19 M1 20 H19 M1 7 H14 V15 H1 M19 7 V15" fill="none" stroke="#fff" strokeWidth="1.2" /></svg>
      </TaskItem>
      <AppIcons />
      <SystemTray />
    </Taskbar>
    <NewCanvasDialog />
    <BackgroundList />
    <FileMenuPopup />
  </Shell>
);

export default App;
